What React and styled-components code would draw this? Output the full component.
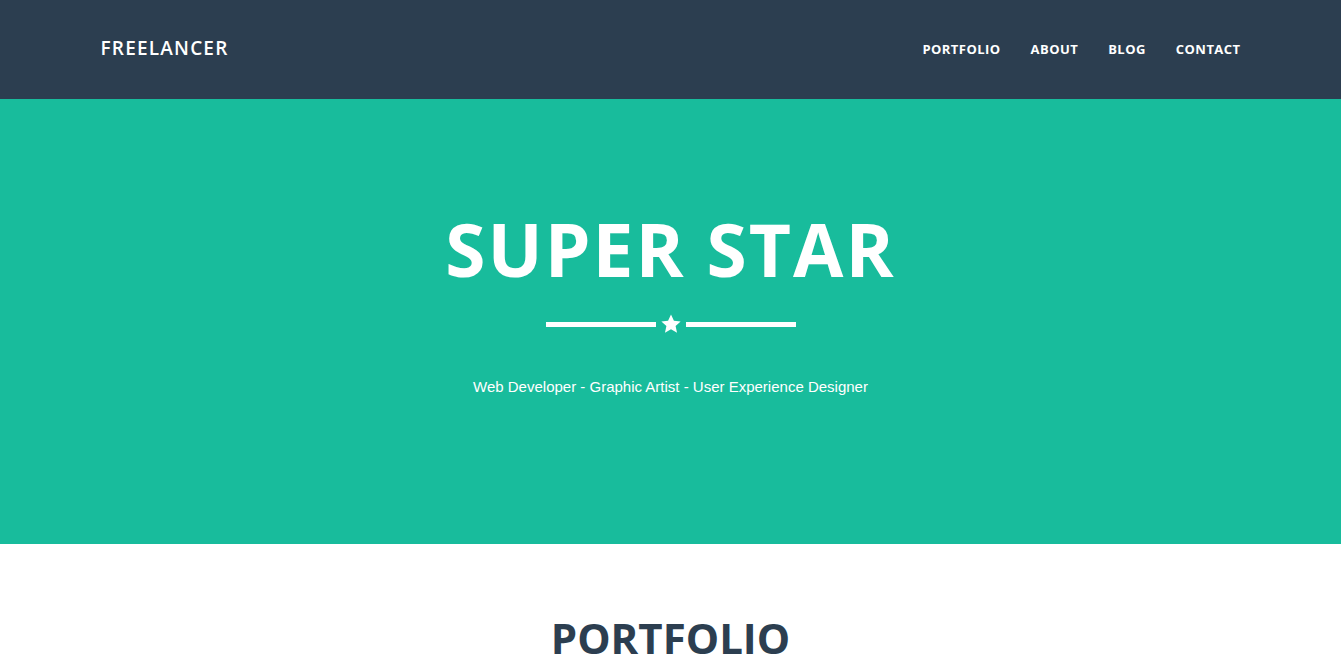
import styled, { createGlobalStyle } from "styled-components";

const Global = createGlobalStyle`
  body {
    margin: 0;
    font-family: "Open Sans", "Liberation Sans", sans-serif;
    background: #fff;
  }
  * { box-sizing: border-box; }
`;

export default function App() {
  return (
    <>
      <Global />
      <Nav>
        <NavInner>
          <Brand>FREELANCER</Brand>
          <Links>
            <NavLink>PORTFOLIO</NavLink>
            <NavLink>ABOUT</NavLink>
            <NavLink>BLOG</NavLink>
            <NavLink>CONTACT</NavLink>
          </Links>
        </NavInner>
      </Nav>
      <Hero>
        <Name>SUPER STAR</Name>
        <Divider>
          <Line />
          <Star viewBox="0 0 24 24">
            <path d="M12 1.5l3.2 6.9 7.3.8-5.5 5 1.6 7.3L12 17.8l-6.6 3.7 1.6-7.3-5.5-5 7.3-.8z" fill="#fff" />
          </Star>
          <Line />
        </Divider>
        <Skills>Web Developer - Graphic Artist - User Experience Designer</Skills>
      </Hero>
      <Section>
        <SectionTitle>PORTFOLIO</SectionTitle>
      </Section>
    </>
  );
}

const Nav = styled.nav`
  background: #2c3e50;
  height: 99px;
`;
const NavInner = styled.div`
  width: 1140px;
  margin: 0 auto;
  height: 100%;
  display: flex;
  align-items: center;
  justify-content: space-between;
`;
const Brand = styled.a`
  color: #fff;
  font-size: 19px;
  font-weight: 600;
  letter-spacing: 1.2px;
  margin-top: -4px;
`;
const Links = styled.div`
  display: flex;
  gap: 30px;
  margin-top: -2px;
`;
const NavLink = styled.a`
  color: #fff;
  font-size: 13px;
  font-weight: 700;
  letter-spacing: 0.45px;
`;
const Hero = styled.header`
  background: #18bc9c;
  height: 445px;
  display: flex;
  flex-direction: column;
  align-items: center;
  padding-top: 108px;
  color: #fff;
`;
const Name = styled.h1`
  margin: 0;
  font-size: 73px;
  font-weight: 700;
  line-height: 84px;
  letter-spacing: 2px;
`;
const Divider = styled.div`
  display: flex;
  align-items: center;
  gap: 4px;
  margin-top: 22px;
`;
const Line = styled.div`
  width: 110px;
  height: 5px;
  background: #fff;
`;
const Star = styled.svg`
  width: 22px;
  height: 22px;
`;
const Skills = styled.p`
  margin: 43px 0 0;
  font-family: "Liberation Sans", Arial, sans-serif;
  font-size: 15px;
`;
const Section = styled.section`
  padding-top: 70px;
  display: flex;
  justify-content: center;
`;
const SectionTitle = styled.h2`
  margin: 0;
  color: #2c3e50;
  font-size: 42px;
  font-weight: 700;
  line-height: 48px;
`;
